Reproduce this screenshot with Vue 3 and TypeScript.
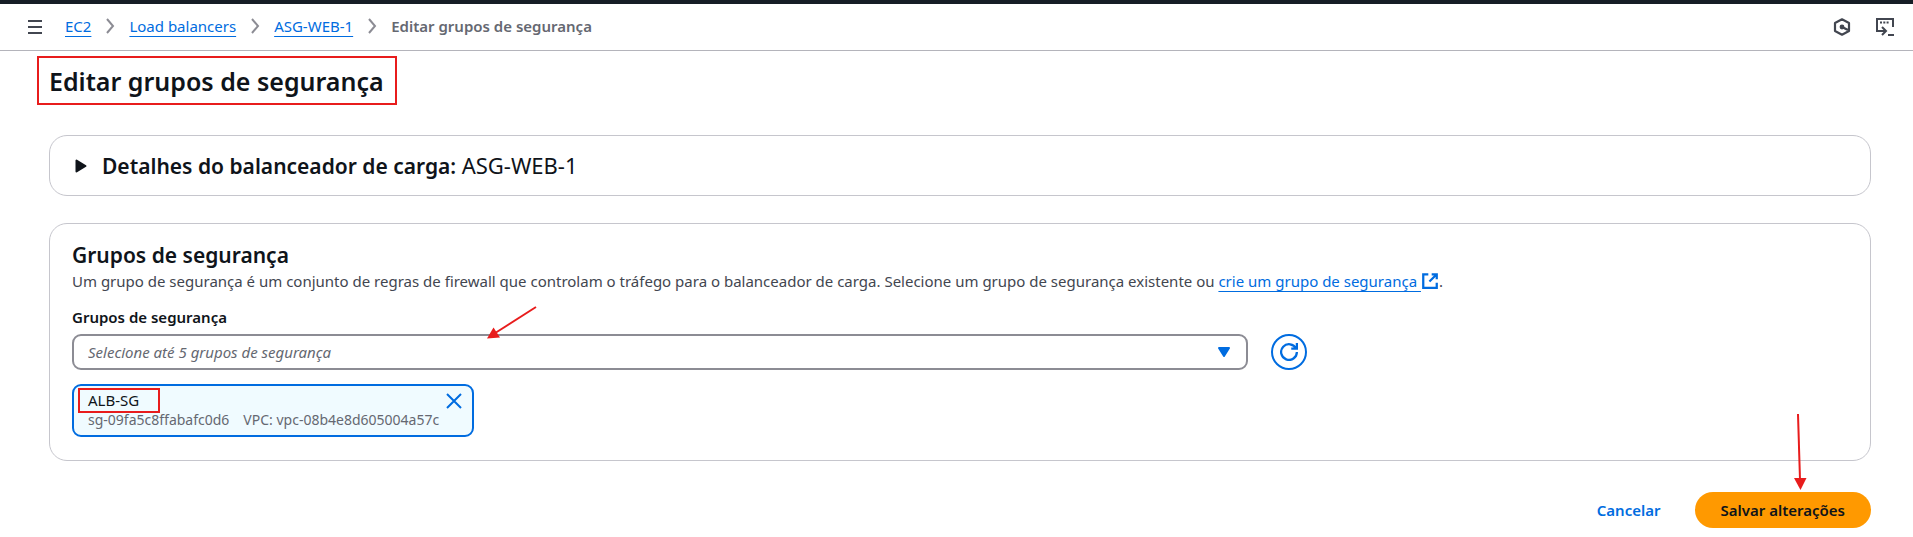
<script setup lang="ts">
import { ref } from 'vue'

interface Crumb {
  text: string
  href: string
}

interface SecurityGroup {
  name: string
  id: string
  vpc: string
}

const crumbs: Crumb[] = [
  { text: 'EC2', href: '#ec2' },
  { text: 'Load balancers', href: '#load-balancers' },
  { text: 'ASG-WEB-1', href: '#asg-web-1' },
]

const groups = ref<SecurityGroup[]>([
  { name: 'ALB-SG', id: 'sg-09fa5c8ffabafc0d6', vpc: 'vpc-08b4e8d605004a57c' },
])
const choice = ref('')
const expanded = ref(false)

function remove(id: string) {
  groups.value = groups.value.filter((g) => g.id !== id)
}
</script>

<template>
  <div class="page">
    <header class="topbar">
      <button class="icon-button" type="button" aria-label="Menu">
        <svg width="16" height="16" viewBox="0 0 16 16"><path d="M1 2h14M1 8h14M1 14h14" /></svg>
      </button>
      <nav class="crumbs" aria-label="Trilha">
        <template v-for="crumb in crumbs" :key="crumb.text">
          <a :href="crumb.href">{{ crumb.text }}</a>
          <svg class="chevron" width="10" height="16" viewBox="0 0 10 16"><path d="M2 1l6 7-6 7" /></svg>
        </template>
        <span class="current" aria-current="page">Editar grupos de segurança</span>
      </nav>
      <div class="tools">
        <button class="icon-button" type="button" aria-label="Amazon Q">
          <svg width="18" height="18" viewBox="0 0 18 18">
            <path d="M9 1.300l7 3.700v8l-7 3.700L2 13V5z" stroke-linejoin="round" stroke-width="2.200" />
            <path d="M9 9l6 3" stroke-width="2.400" />
            <circle cx="9" cy="9" r="2.400" class="solid" />
          </svg>
        </button>
        <button class="icon-button" type="button" aria-label="CloudShell">
          <svg width="18" height="18" viewBox="0 0 18 18">
            <path d="M4 13H1V1h16v8" />
            <path d="M4 4.500h9" stroke-dasharray="2 1.300" />
            <path d="M2 13h8M6 9l4 4-4 4M12 17h6" />
          </svg>
        </button>
      </div>
    </header>

    <main class="content">
      <h1 class="title">Editar grupos de segurança<span class="mark title-mark"></span></h1>

      <section class="panel details">
        <button class="expander" type="button" :aria-expanded="expanded" @click="expanded = !expanded">
          <svg width="12" height="14" viewBox="0 0 12 14"><path d="M1.500 1.500v11L10.500 7z" /></svg>
          <span><b>Detalhes do balanceador de carga:</b> <span class="lb-name">ASG-WEB-1</span></span>
        </button>
      </section>

      <section class="panel groups">
        <h2>Grupos de segurança</h2>
        <p class="description">
          Um grupo de segurança é um conjunto de regras de firewall que controlam o tráfego para o balanceador de carga. Selecione um grupo de segurança existente ou
          <a href="#criar">crie um grupo de segurança&nbsp;</a><svg class="external" width="18" height="18" viewBox="0 0 16 16"><path d="M6.500 2H2v12h12V9.500M9.500 2H14v4.500M7.500 8.500L14 2" /></svg>.
        </p>
        <label class="label" for="sg">Grupos de segurança</label>
        <div class="row">
          <div class="field">
            <select id="sg" v-model="choice">
              <option value="" disabled>Selecione até 5 grupos de segurança</option>
              <option v-for="g in groups" :key="g.id" :value="g.id">{{ g.name }}</option>
            </select>
            <svg class="caret" width="14" height="12" viewBox="0 0 14 12"><path d="M2 2h10L7 10z" /></svg>
            <svg class="arrow select-arrow" width="56" height="38" viewBox="0 0 56 38">
              <path class="shaft" d="M54 3L14 28.500" />
              <path class="head" d="M5 34.500L11.500 23.500 18 33.500z" />
            </svg>
          </div>
          <button class="refresh" type="button" aria-label="Atualizar">
            <svg width="18" height="18" viewBox="0 0 16 16">
              <path d="M10 5h5V0M15 8a7 7 0 1 1-.7-3" />
            </svg>
          </button>
        </div>
        <ul class="tokens">
          <li v-for="g in groups" :key="g.id" class="token">
            <div>
              <div class="name">{{ g.name }}</div>
              <div class="meta"><span>{{ g.id }}</span><span>VPC: {{ g.vpc }}</span></div>
            </div>
            <button class="close" type="button" :aria-label="`Remover ${g.name}`" @click="remove(g.id)">
              <svg width="16" height="16" viewBox="0 0 16 16"><path d="M1 1l14 14M15 1L1 15" /></svg>
            </button>
            <span class="mark token-mark"></span>
          </li>
        </ul>
      </section>

      <footer class="actions">
        <button class="cancel" type="button">Cancelar</button>
        <button class="save" type="button">
          Salvar alterações
          <svg class="arrow save-arrow" width="16" height="78" viewBox="0 0 16 78">
            <path class="shaft" d="M6 1l2 66" />
            <path class="head" d="M2 65h12.500L8.500 77z" />
          </svg>
        </button>
      </footer>
    </main>
  </div>
</template>

<style>
body {
  background: #fff;
}
</style>

<style scoped>
.page {
  font: 15px/22px "Noto Sans", "Open Sans", sans-serif;
  color: #0f141a;
  border-top: 4px solid #161d26;
}

button,
select {
  font: inherit;
  color: inherit;
  background: none;
  border: 0;
  padding: 0;
  margin: 0;
  cursor: pointer;
}

svg {
  display: block;
  fill: none;
  stroke: currentColor;
  stroke-width: 2;
}

a {
  color: #006ce0;
  text-decoration: underline 1px;
  text-underline-offset: 4px;
}

.topbar {
  display: flex;
  align-items: center;
  height: 46px;
  padding: 0 19px 0 27px;
  border-bottom: 1px solid #b4b4bb;
}

.icon-button {
  color: #424650;
}

.crumbs {
  display: flex;
  align-items: center;
  gap: 14px;
  margin-left: 22px;
  padding-bottom: 2px;
}

.chevron {
  color: #8c8c94;
}

.current {
  color: #656871;
  font-weight: 600;
}

.tools {
  display: flex;
  gap: 25px;
  margin-left: auto;
}

.content {
  padding: 15px 42px 9px 49px;
}

.title {
  position: relative;
  width: max-content;
  margin: 0 0 39px;
  font-size: 25px;
  line-height: 30px;
  font-weight: 600;
}

.mark {
  position: absolute;
  border: 2px solid #e81c1c;
  pointer-events: none;
}

.title-mark {
  inset: -10px -13px -9px -12px;
}

.panel {
  border: 1px solid #c6c6cd;
  border-radius: 18px;
}

.details {
  padding: 16px 25px 15px;
}

.expander {
  display: flex;
  align-items: center;
  gap: 15px;
  font-size: 21px;
  line-height: 28px;
}

.expander b {
  font-weight: 600;
}

.expander svg {
  fill: currentColor;
  stroke-linejoin: round;
}

.lb-name {
  font-size: 22px;
  line-height: 22px;
}

.groups {
  margin-top: 27px;
  padding: 18px 22px 23px;
}

h2 {
  margin: 0 0 2px;
  font-size: 21px;
  line-height: 26px;
  font-weight: 600;
}

.description {
  margin: 0 0 14px;
  color: #424650;
}

.external {
  display: inline-block;
  vertical-align: -3px;
  color: #006ce0;
}

.label {
  display: block;
  margin-bottom: 6px;
  font-weight: 600;
}

.row {
  display: grid;
  grid-template-columns: 2fr 1fr;
  gap: 12px;
}

.field {
  position: relative;
}

select {
  display: block;
  box-sizing: border-box;
  width: 100%;
  height: 36px;
  padding: 0 40px 0 14px;
  border: 2px solid #8c8c94;
  border-radius: 9px;
  appearance: none;
  color: #656871;
  font-style: italic;
}

.caret {
  position: absolute;
  top: 12px;
  right: 17px;
  color: #006ce0;
  fill: currentColor;
  stroke-linejoin: round;
  pointer-events: none;
}

.arrow {
  position: absolute;
  color: #e81c1c;
  pointer-events: none;
}

.head,
.solid {
  fill: currentColor;
  stroke: none;
}

.select-arrow {
  top: -30px;
  left: 410px;
}

.refresh {
  display: grid;
  place-items: center;
  box-sizing: border-box;
  width: 36px;
  height: 36px;
  margin-left: 11px;
  border: 2px solid #006ce0;
  border-radius: 50%;
  color: #006ce0;
}

.tokens {
  display: flex;
  margin: 14px 0 0;
  padding: 0;
  list-style: none;
}

.token {
  position: relative;
  display: flex;
  gap: 7px;
  padding: 4px 10px 5px 14px;
  border: 2px solid #006ce0;
  border-radius: 9px;
  background: #f0fbff;
  line-height: 20px;
}

.meta {
  display: flex;
  gap: 14px;
  font-size: 14px;
  color: #656871;
}

.close {
  align-self: flex-start;
  padding-top: 3px;
  color: #006ce0;
}

.token-mark {
  top: 2px;
  left: 4px;
  width: 78px;
  height: 21px;
}

.actions {
  display: flex;
  justify-content: flex-end;
  gap: 34px;
  margin-top: 31px;
  font-weight: 600;
}

.cancel {
  color: #006ce0;
}

.save {
  position: relative;
  height: 36px;
  padding: 0 26px;
  border-radius: 18px;
  background: #ff9900;
}

.save-arrow {
  top: -79px;
  left: 97px;
}
</style>
